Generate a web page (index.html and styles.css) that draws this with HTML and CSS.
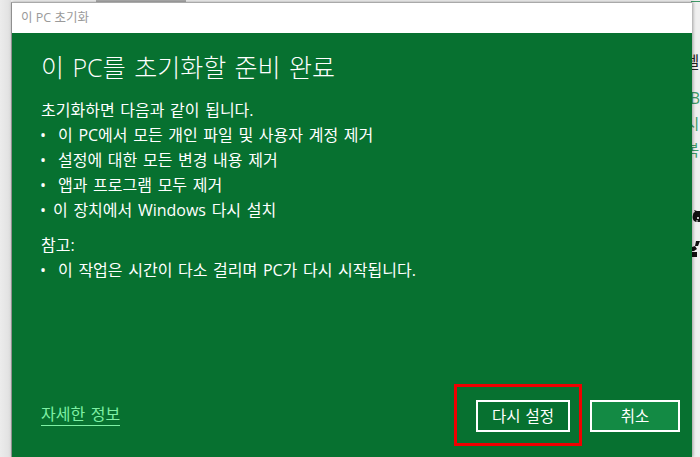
FILE: index.html
```html
<!DOCTYPE html>
<html lang="ko">
<head>
<meta charset="utf-8">
<title>이 PC 초기화</title>
<link rel="stylesheet" href="styles.css">
</head>
<body>
<div class="backdrop">
  <div class="top-strip"></div>
  <div class="top-corner"></div>
  <aside class="behind" aria-hidden="true">
    <span class="b-text b-dark b1">렐</span>
    <span class="b-text b-green b2">Bi</span>
    <span class="b-text b-green b3">시</span>
    <span class="b-text b-green b4">복</span>
    <svg class="b-icon b5" viewBox="0 0 8 14"><path d="M2 1 5 2 8 2V13L4 13C1 12 0 9 1 6 1 4 2 3 3 3Z" fill="#111"/><circle cx="6" cy="9" r="1" fill="#fff"/><circle cx="5" cy="12" r=".8" fill="#fff"/></svg>
    <svg class="b-icon b6" viewBox="0 0 8 16"><path d="M4 0H8L6 5H3ZM0 6 3 5 5 8 2 10H0ZM0 11H5V16H0Z" fill="#111"/></svg>
  </aside>
  <section class="dialog">
    <header class="titlebar">이 PC 초기화</header>
    <div class="panel">
      <div class="content">
        <h1 class="heading">이 PC를 초기화할 준비 완료</h1>
        <p class="line">초기화하면 다음과 같이 됩니다.</p>
        <ul class="list">
          <li><span class="dot">•</span>이 PC에서 모든 개인 파일 및 사용자 계정 제거</li>
          <li><span class="dot">•</span>설정에 대한 모든 변경 내용 제거</li>
          <li><span class="dot">•</span>앱과 프로그램 모두 제거</li>
          <li><span class="dot narrow">•</span>이 장치에서 Windows 다시 설치</li>
        </ul>
        <p class="line note">참고:</p>
        <ul class="list">
          <li><span class="dot">•</span>이 작업은 시간이 다소 걸리며 PC가 다시 시작됩니다.</li>
        </ul>
      </div>
      <footer class="actions">
        <a class="more" href="#">자세한 정보</a>
        <div class="buttons">
          <div class="reset-wrap">
            <button class="btn">다시 설정</button>
            <div class="highlight"></div>
          </div>
          <button class="btn cancel">취소</button>
        </div>
      </footer>
    </div>
  </section>
</div>
</body>
</html>
```
FILE: styles.css
```css
* { box-sizing: border-box; }
html, body { margin: 0; padding: 0; }
body {
  width: 700px;
  height: 457px;
  overflow: hidden;
  background: #f0f0f0;
  font-family: "Open Sans", "Noto Sans CJK KR", sans-serif;
}
.backdrop {
  position: relative;
  width: 700px;
  height: 457px;
  overflow: hidden;
  background: linear-gradient(90deg, #ececec 0, #e0e0e0 11px, #f0f0f0 11px);
}
.top-strip {
  position: absolute;
  left: 96px;
  top: 0;
  width: 90px;
  height: 3px;
  background: #adadad;
}
.top-corner {
  position: absolute;
  left: 691px;
  top: 0;
  width: 9px;
  height: 2px;
  border-bottom: 1px solid #3f9a68;
}
.dialog {
  position: absolute;
  left: 11px;
  top: 2px;
  width: 681px;
  height: 455px;
  display: flex;
  flex-direction: column;
  border-top: 1px solid #a9a9a9;
  border-left: 1px solid #8f8f8f;
  box-shadow: 1px 0 3px rgba(0,0,0,.35);
}
.titlebar {
  height: 30px;
  flex: none;
  background: #fff;
  color: #9a9a9a;
  font-size: 12.5px;
  line-height: 29px;
  padding-left: 9px;
}
.panel {
  flex: 1;
  background: #077130;
  color: #fff;
  display: flex;
  flex-direction: column;
  justify-content: space-between;
}
.content { padding: 16px 29px 0; }
.heading {
  margin: 0 0 13px;
  font-size: 25px;
  font-weight: 300;
  line-height: 36px;
  word-spacing: 2px;
}
.line {
  margin: 0;
  font-size: 16px;
  line-height: 25px;
  word-spacing: 1.5px;
}
.list { margin: 0; padding: 0; list-style: none; }
.list li { font-size: 16px; line-height: 25px; display: flex; white-space: pre-wrap; word-spacing: 1.5px; }
.dot { width: 17px; flex: none; font-size: 16px; line-height: 25px; margin-left: -1px; margin-right: 1px; }
.dot.narrow { width: 12px; }
.note { margin-top: 10px; }
.actions {
  display: flex;
  justify-content: space-between;
  align-items: flex-end;
  padding: 0 12px 25px 29px;
}
.more {
  color: #7ef0a4;
  font-size: 16px;
  line-height: 21px;
  text-decoration: none;
  border-bottom: 1px solid #7ef0a4;
  margin-bottom: 6px;
  word-spacing: 1.5px;
}
.buttons { display: flex; gap: 20px; }
.reset-wrap { position: relative; }
.highlight {
  position: absolute;
  left: -22px;
  top: -16px;
  width: 128px;
  height: 62px;
  border: 3px solid #f00000;
  pointer-events: none;
}
.btn {
  display: block;
  width: 94px;
  height: 32px;
  border: 2px solid #fff;
  background: transparent;
  color: #fff;
  font: 15.5px/26px "Open Sans", "Noto Sans CJK KR", sans-serif;
  word-spacing: 1px;
  padding: 0;
}
.cancel {
  width: 90px;
  background: #138a44;
}
.behind { position: absolute; inset: 0; }
.b-text { position: absolute; left: 685px; font-size: 15.5px; line-height: 18px; white-space: nowrap; }
.b-dark { color: #222; }
.b-green { color: #3f9a68; }
.b1 { top: 53px; }
.b2 { top: 89px; left: 690px; }
.b3 { top: 115px; }
.b4 { top: 141px; }
.b-icon { position: absolute; left: 692px; width: 8px; }
.b5 { top: 209px; height: 14px; }
.b6 { top: 241px; height: 16px; }
```
